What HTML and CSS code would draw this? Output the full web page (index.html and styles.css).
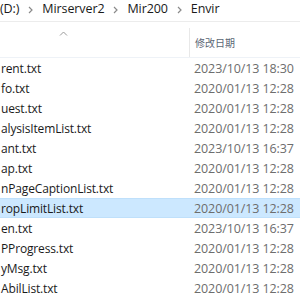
FILE: index.html
```html
<!DOCTYPE html>
<html lang="zh-CN">
<head>
    <meta charset="UTF-8">
    <meta name="viewport" content="width=device-width, initial-scale=1.0">
    <title>Envir</title>
    <link rel="stylesheet" href="styles.css">
</head>
<body>
    <div class="crumbs">
        <span class="crumb">(D:)</span>
        <svg class="chev" width="5" height="8" viewBox="0 0 5 8"><path d="M1 1l3 3-3 3" fill="none" stroke="#8a8a8a" stroke-width="1.2"/></svg>
        <span class="crumb">Mirserver2</span>
        <svg class="chev" width="5" height="8" viewBox="0 0 5 8"><path d="M1 1l3 3-3 3" fill="none" stroke="#8a8a8a" stroke-width="1.2"/></svg>
        <span class="crumb">Mir200</span>
        <svg class="chev" width="5" height="8" viewBox="0 0 5 8"><path d="M1 1l3 3-3 3" fill="none" stroke="#8a8a8a" stroke-width="1.2"/></svg>
        <span class="crumb">Envir</span>
    </div>

    <div class="header">
        <div class="col-name">
            <svg class="sort" width="9" height="5" viewBox="0 0 9 5"><path d="M1 4.5l3.5-3.5 3.5 3.5" fill="none" stroke="#9a9a9a" stroke-width="1"/></svg>
        </div>
        <div class="col-date">修改日期</div>
    </div>

    <div class="list">
        <div class="row"><span class="name">rent.txt</span><span class="date">2023/10/13 18:30</span></div>
        <div class="row"><span class="name">fo.txt</span><span class="date">2020/01/13 12:28</span></div>
        <div class="row"><span class="name">uest.txt</span><span class="date">2020/01/13 12:28</span></div>
        <div class="row"><span class="name">alysisItemList.txt</span><span class="date">2020/01/13 12:28</span></div>
        <div class="row"><span class="name">ant.txt</span><span class="date">2023/10/13 16:37</span></div>
        <div class="row"><span class="name">ap.txt</span><span class="date">2020/01/13 12:28</span></div>
        <div class="row"><span class="name">nPageCaptionList.txt</span><span class="date">2020/01/13 12:28</span></div>
        <div class="row selected"><span class="name">ropLimitList.txt</span><span class="date">2020/01/13 12:28</span></div>
        <div class="row"><span class="name">en.txt</span><span class="date">2023/10/13 16:37</span></div>
        <div class="row"><span class="name">PProgress.txt</span><span class="date">2020/01/13 12:28</span></div>
        <div class="row"><span class="name">yMsg.txt</span><span class="date">2020/01/13 12:28</span></div>
        <div class="row"><span class="name">AbilList.txt</span><span class="date">2020/01/13 12:28</span></div>
    </div>
</body>
</html>
```

FILE: styles.css
```css
html, body {
    margin: 0;
    padding: 0;
    background: #fff;
}
body {
    width: 300px;
    height: 300px;
    overflow: hidden;
    font-family: "Open Sans", "Noto Sans CJK SC", sans-serif;
    font-size: 12.5px;
    color: #1a1a1a;
}
.crumbs {
    height: 21px;
    border-bottom: 1px solid #ececec;
    display: flex;
    align-items: center;
    gap: 9px;
    white-space: nowrap;
}
.crumb {
    line-height: 18px;
    margin-top: -3px;
    letter-spacing: -0.1px;
}
.chev {
    margin-top: -2px;
}
.header {
    height: 35px;
    display: flex;
    border-bottom: 1px solid #eef2f7;
}
.col-name {
    width: 189px;
    border-right: 1px solid #e8e8e8;
    margin-top: 6px;
    position: relative;
}
.sort {
    position: absolute;
    left: 59px;
    top: 3px;
}
.col-date {
    padding-left: 5px;
    padding-top: 13px;
    font-family: "Noto Sans CJK SC", sans-serif;
    font-size: 10px;
    color: #5b6675;
}
.list {
    display: flex;
    flex-direction: column;
}
.row {
    height: 20px;
    display: flex;
    align-items: center;
    white-space: nowrap;
    box-sizing: border-box;
}
.row.selected {
    background: #cce8ff;
    border-top: 1px solid #bfe0fb;
    border-bottom: 1px solid #bfe0fb;
}
.name {
    width: 190px;
    padding-left: 1px;
    overflow: hidden;
    font-size: 12px;
    letter-spacing: -0.15px;
}
.date {
    padding-left: 3px;
    color: #6d6d6d;
    letter-spacing: -0.1px;
}
```
